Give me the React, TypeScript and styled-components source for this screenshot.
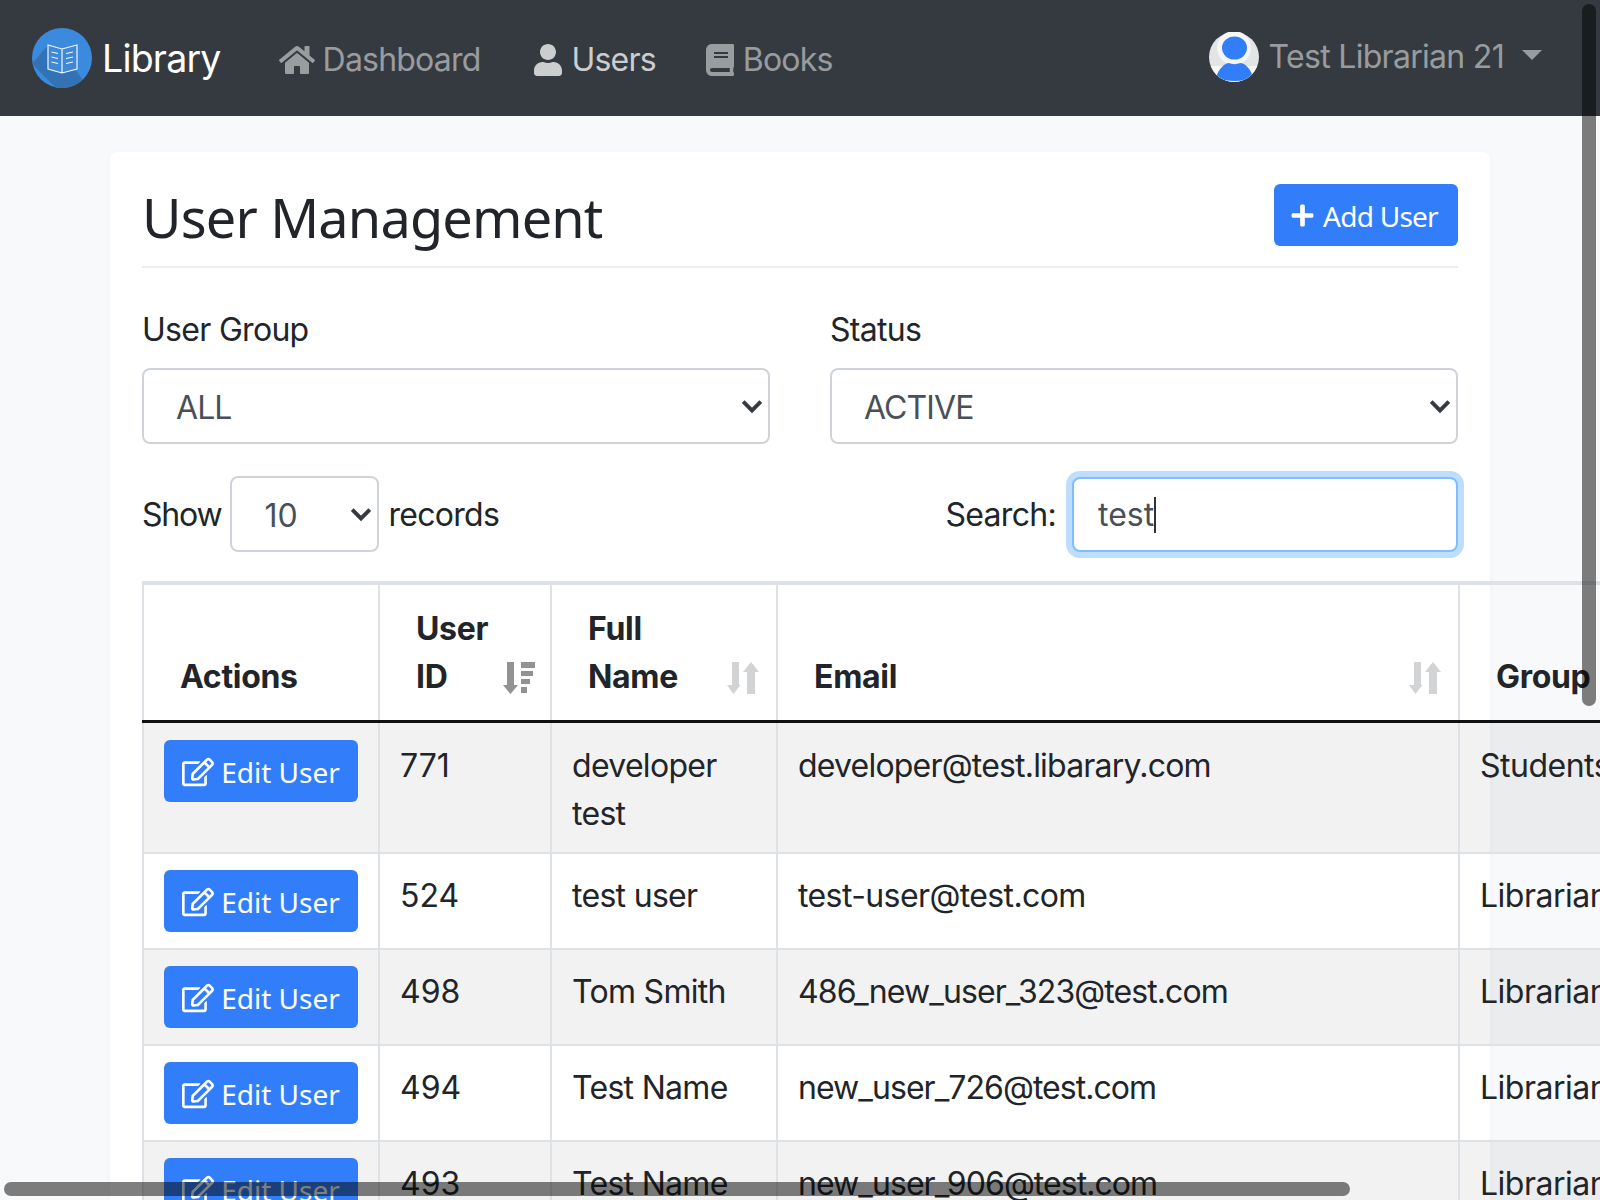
import styled, { createGlobalStyle } from 'styled-components';
import { FaBook, FaHome, FaPlus, FaRegEdit, FaUser } from 'react-icons/fa';

const chevron =
  "url(\"data:image/svg+xml,%3Csvg xmlns='http://www.w3.org/2000/svg' viewBox='0 0 4 5'%3E%3Cpath fill='none' stroke='%23343a40' stroke-width='.7' d='M.4 1.7 2 3.3 3.6 1.7'/%3E%3C/svg%3E\")";

const GlobalStyle = createGlobalStyle`
  html, body {
    margin: 0;
    height: 1200px;
    overflow: hidden;
    background: #f8f9fa;
    color: #212529;
    font-family: Inter, "Liberation Sans", sans-serif;
    font-size: 32px;
    line-height: 48px;
    letter-spacing: -0.7px;
  }
  * { box-sizing: border-box; }
`;

const Navbar = styled.nav`
  height: 116px;
  background: #343a40;
  display: flex;
  align-items: center;
  padding: 0 58px 0 32px;
`;

const Brand = styled.div`
  display: flex;
  align-items: center;
  gap: 10px;
  color: #fff;
  font-size: 37.5px;
  letter-spacing: -0.8px;
  margin-right: 58px;
`;

const BrandName = styled.span`
  padding-top: 2px;
`;

const NavLink = styled.div<{ $active?: boolean; $gap?: number; $after?: number }>`
  display: flex;
  align-items: center;
  gap: ${(p) => p.$gap ?? 7}px;
  margin-right: ${(p) => p.$after ?? 50}px;
  padding-top: 3px;
  letter-spacing: -0.8px;
  color: ${(p) => (p.$active ? 'rgba(255,255,255,.75)' : 'rgba(255,255,255,.5)')};
`;

const UserMenu = styled.div`
  margin-left: auto;
  display: flex;
  align-items: center;
  gap: 10px;
  color: rgba(255,255,255,.5);
  position: relative;
  top: -1px;
`;

const Caret = styled.span`
  width: 0;
  height: 0;
  margin-left: 8px;
  margin-bottom: 4px;
  border-top: 10px solid rgba(255,255,255,.5);
  border-left: 10px solid transparent;
  border-right: 10px solid transparent;
`;

const Card = styled.main`
  margin: 36px 110px 0;
  padding: 32px;
  height: 1100px;
  background: #fff;
  border-radius: 8px;
  box-shadow: 0 2px 8px rgba(0,0,0,.03);
`;

const Header = styled.div`
  display: flex;
  align-items: flex-start;
  justify-content: space-between;
  height: 84px;
  border-bottom: 2px solid #eeeeee;
`;

const Title = styled.h1`
  margin: 0;
  font-family: "Noto Sans", sans-serif;
  font-weight: 400;
  font-size: 54px;
  letter-spacing: -0.8px;
  line-height: 66px;
`;

const PrimaryButton = styled.button`
  display: flex;
  align-items: center;
  justify-content: center;
  gap: 7px;
  height: 62px;
  border: 0;
  border-radius: 6px;
  background: #327efa;
  color: #fff;
  font-family: "Noto Sans", sans-serif;
  font-size: 28px;
  padding: 1px 0 0;
`;

const AddButton = styled(PrimaryButton)`
  width: 184px;
  letter-spacing: -0.75px;
  gap: 8px;
  padding-right: 4px;
`;

const EditButton = styled(PrimaryButton)`
  width: 194px;
`;

const FilterGrid = styled.div`
  display: grid;
  grid-template-columns: 1fr 1fr;
  gap: 60px;
  margin-top: 38px;
`;

const FieldLabel = styled.label`
  display: block;
  margin-bottom: 14px;
`;

const Select = styled.select<{ $small?: boolean }>`
  appearance: none;
  display: block;
  width: ${(p) => (p.$small ? '149px' : '100%')};
  height: 76px;
  padding: 4px 0 0 32px;
  border: 2px solid #ced4da;
  border-radius: 8px;
  background: #fff ${chevron} no-repeat right 5px center / 22px 27.5px;
  color: #495057;
  font: inherit;
  letter-spacing: ${(p) => (p.$small ? '0' : '-0.9px')};
`;

const ControlsRow = styled.div`
  display: flex;
  justify-content: space-between;
  align-items: center;
  margin-top: 32px;
`;

const ControlGroup = styled.div`
  display: flex;
  align-items: center;
  gap: 9px;
`;

const ControlText = styled.span`
  padding-top: 2px;
`;

const ShowText = styled(ControlText)`
  letter-spacing: -1.2px;
`;

const SearchBox = styled.div`
  width: 386px;
  height: 75px;
  margin-left: 7px;
  padding: 2px 24px 0;
  display: flex;
  align-items: center;
  border: 2px solid #80bdff;
  border-radius: 8px;
  background: #fff;
  color: #495057;
  letter-spacing: 0;
  box-shadow: 0 0 0 6px rgba(0,123,255,.25);
`;

const TextCaret = styled.span`
  width: 2px;
  height: 36px;
  background: #333;
`;

const Table = styled.table`
  width: 1780px;
  margin-top: 29px;
  table-layout: fixed;
  border-collapse: collapse;
  border-top: 4px solid #dee2e6;
`;

const HeadCell = styled.th<{ $sortable?: boolean }>`
  position: relative;
  padding: 20px ${(p) => (p.$sortable ? '50px' : '36px')} 19px 36px;
  text-align: left;
  vertical-align: bottom;
  font-weight: 700;
  letter-spacing: -0.3px;
  background: #fff;
  border: 2px solid #dee2e6;
  border-top: 0;
  border-bottom: 3px solid #111;
  &:last-child { background: transparent; }
`;

const SortIcon = styled.svg<{ $sorted?: boolean }>`
  position: absolute;
  right: ${(p) => (p.$sorted ? '15px' : '17px')};
  bottom: 26px;
  display: block;
  width: 32px;
  height: 32px;
  fill: ${(p) => (p.$sorted ? '#919293' : '#d2d3d4')};
`;

const Row = styled.tr<{ $striped?: boolean }>`
  background: ${(p) => (p.$striped ? 'rgba(0,0,0,.05)' : 'transparent')};
`;

const Cell = styled.td<{ $spacing?: string }>`
  padding: 18px 20px 15px;
  vertical-align: top;
  border: 2px solid #dee2e6;
  letter-spacing: ${(p) => p.$spacing ?? '-0.7px'};
  tr:first-child > & {
    padding: 19px 20px 14px;
  }
`;

const ActionCell = styled(Cell)`
  padding: 16px 20px;
  tr:first-child > & {
    padding: 17px 20px 15px;
  }
`;

const ScrollThumb = styled.div<{ $vertical?: boolean }>`
  position: fixed;
  background: rgba(0,0,0,.5);
  border-radius: 7px;
  ${(p) =>
    p.$vertical
      ? 'right: 4px; top: 4px; width: 14px; height: 702px;'
      : 'left: 4px; bottom: 4px; height: 14px; width: 1346px;'}
`;

const Logo = () => (
  <svg width="60" height="60" viewBox="0 0 60 60">
    <defs>
      <clipPath id="logo-clip">
        <circle cx="30" cy="30" r="30" />
      </clipPath>
    </defs>
    <circle cx="30" cy="30" r="30" fill="#3c8ade" />
    <path d="M16 17 L0 36 L28 64 L60 64 L45 44 Z" fill="#3272b5" clipPath="url(#logo-clip)" />
    <path
      d="M16 17 L30 21 L45 17 V41 L30 45 L16 41 Z M30 21 V45"
      fill="#3f88d6"
      stroke="#f0f6fc"
      strokeWidth="1.2"
    />
    <path
      d="M19.5 24 L26 25.5 M19.5 29 L26 30.5 M19.5 34 L26 35.5 M34 25.5 L41 24 M34 30.5 L41 29 M34 35.5 L41 34"
      stroke="#f0f6fc"
      strokeWidth="1.2"
    />
  </svg>
);

const Avatar = () => (
  <svg width="50" height="50" viewBox="0 0 50 50">
    <defs>
      <clipPath id="avatar-clip">
        <circle cx="25" cy="25" r="25" />
      </clipPath>
    </defs>
    <circle cx="25" cy="25" r="25" fill="#e4e4e4" />
    <circle cx="25" cy="16" r="17" fill="#f6f6f6" />
    <path d="M0 34 H50 V50 H0 Z" fill="#f6f6f6" clipPath="url(#avatar-clip)" />
    <ellipse cx="25.5" cy="16" rx="12.5" ry="11.5" fill="#327efa" />
    <path
      d="M7 46 C9 37 16 31 20 31 C23 32.5 28 32.5 31 31 C36 31 42 37 44 46 C34 50 18 50 7 46 Z"
      fill="#327efa"
      clipPath="url(#avatar-clip)"
    />
  </svg>
);

const SortArrows = () => (
  <SortIcon viewBox="0 0 32 32">
    <path d="M5 0 H12 V23 H13.5 L6.5 32 L0 23 H5 Z" />
    <path d="M24 0 L32 10 H28 V32 H20 V10 H16 Z" />
  </SortIcon>
);

const SortedArrows = () => (
  <SortIcon $sorted viewBox="0 0 32 32">
    <path d="M4 0 H11 V23 H15 L7.5 32 L0 23 H4 Z" />
    <path d="M18 0 H32 V6 H18 Z M18 9 H30 V14 H18 Z M18 17 H27 V22 H18 Z M18 25 H24 V31 H18 Z" />
  </SortIcon>
);

const rows = [
  { id: 771, name: 'developer test', email: 'developer@test.libarary.com', emailSpacing: '-0.8px', group: 'Students' },
  { id: 524, name: 'test user', email: 'test-user@test.com', emailSpacing: '-0.6px', group: 'Librarian' },
  { id: 498, name: 'Tom Smith', email: '486_new_user_323@test.com', emailSpacing: '-0.92px', group: 'Librarian' },
  { id: 494, name: 'Test Name', email: 'new_user_726@test.com', emailSpacing: '-0.95px', group: 'Librarian' },
  { id: 493, name: 'Test Name', email: 'new_user_906@test.com', emailSpacing: '-0.95px', group: 'Librarian' },
];

const App = () => {
  return (
    <>
      <GlobalStyle />
      <Navbar>
        <Brand>
          <Logo />
          <BrandName>Library</BrandName>
        </Brand>
        <NavLink $gap={8} $after={52}>
          <FaHome size={36} />
          Dashboard
        </NavLink>
        <NavLink $active $after={48}>
          <FaUser size={32} />
          Users
        </NavLink>
        <NavLink>
          <FaBook size={32} />
          Books
        </NavLink>
        <UserMenu>
          <Avatar />
          Test Librarian 21
          <Caret />
        </UserMenu>
      </Navbar>
      <Card>
        <Header>
          <Title>User Management</Title>
          <AddButton>
            <FaPlus size={25} />
            Add User
          </AddButton>
        </Header>
        <FilterGrid>
          <div>
            <FieldLabel>User Group</FieldLabel>
            <Select defaultValue="ALL">
              <option>ALL</option>
            </Select>
          </div>
          <div>
            <FieldLabel>Status</FieldLabel>
            <Select defaultValue="ACTIVE">
              <option>ACTIVE</option>
            </Select>
          </div>
        </FilterGrid>
        <ControlsRow>
          <ControlGroup>
            <ShowText>Show</ShowText>
            <Select $small defaultValue="10">
              <option>10</option>
            </Select>
            <ControlText>records</ControlText>
          </ControlGroup>
          <ControlGroup>
            <ControlText>Search:</ControlText>
            <SearchBox>
              test
              <TextCaret />
            </SearchBox>
          </ControlGroup>
        </ControlsRow>
        <Table>
          <colgroup>
            <col style={{ width: 236 }} />
            <col style={{ width: 172 }} />
            <col style={{ width: 226 }} />
            <col style={{ width: 682 }} />
            <col />
          </colgroup>
          <thead>
            <tr>
              <HeadCell>Actions</HeadCell>
              <HeadCell $sortable>
                User ID
                <SortedArrows />
              </HeadCell>
              <HeadCell $sortable>
                Full Name
                <SortArrows />
              </HeadCell>
              <HeadCell $sortable>
                Email
                <SortArrows />
              </HeadCell>
              <HeadCell>Group</HeadCell>
            </tr>
          </thead>
          <tbody>
            {rows.map((row, i) => (
              <Row key={row.id} $striped={i % 2 === 0}>
                <ActionCell>
                  <EditButton>
                    <FaRegEdit size={32} />
                    Edit User
                  </EditButton>
                </ActionCell>
                <Cell $spacing="0">{row.id}</Cell>
                <Cell>{row.name}</Cell>
                <Cell $spacing={row.emailSpacing}>{row.email}</Cell>
                <Cell $spacing="-0.5px">{row.group}</Cell>
              </Row>
            ))}
          </tbody>
        </Table>
      </Card>
      <ScrollThumb $vertical />
      <ScrollThumb />
    </>
  );
};

export default App;
